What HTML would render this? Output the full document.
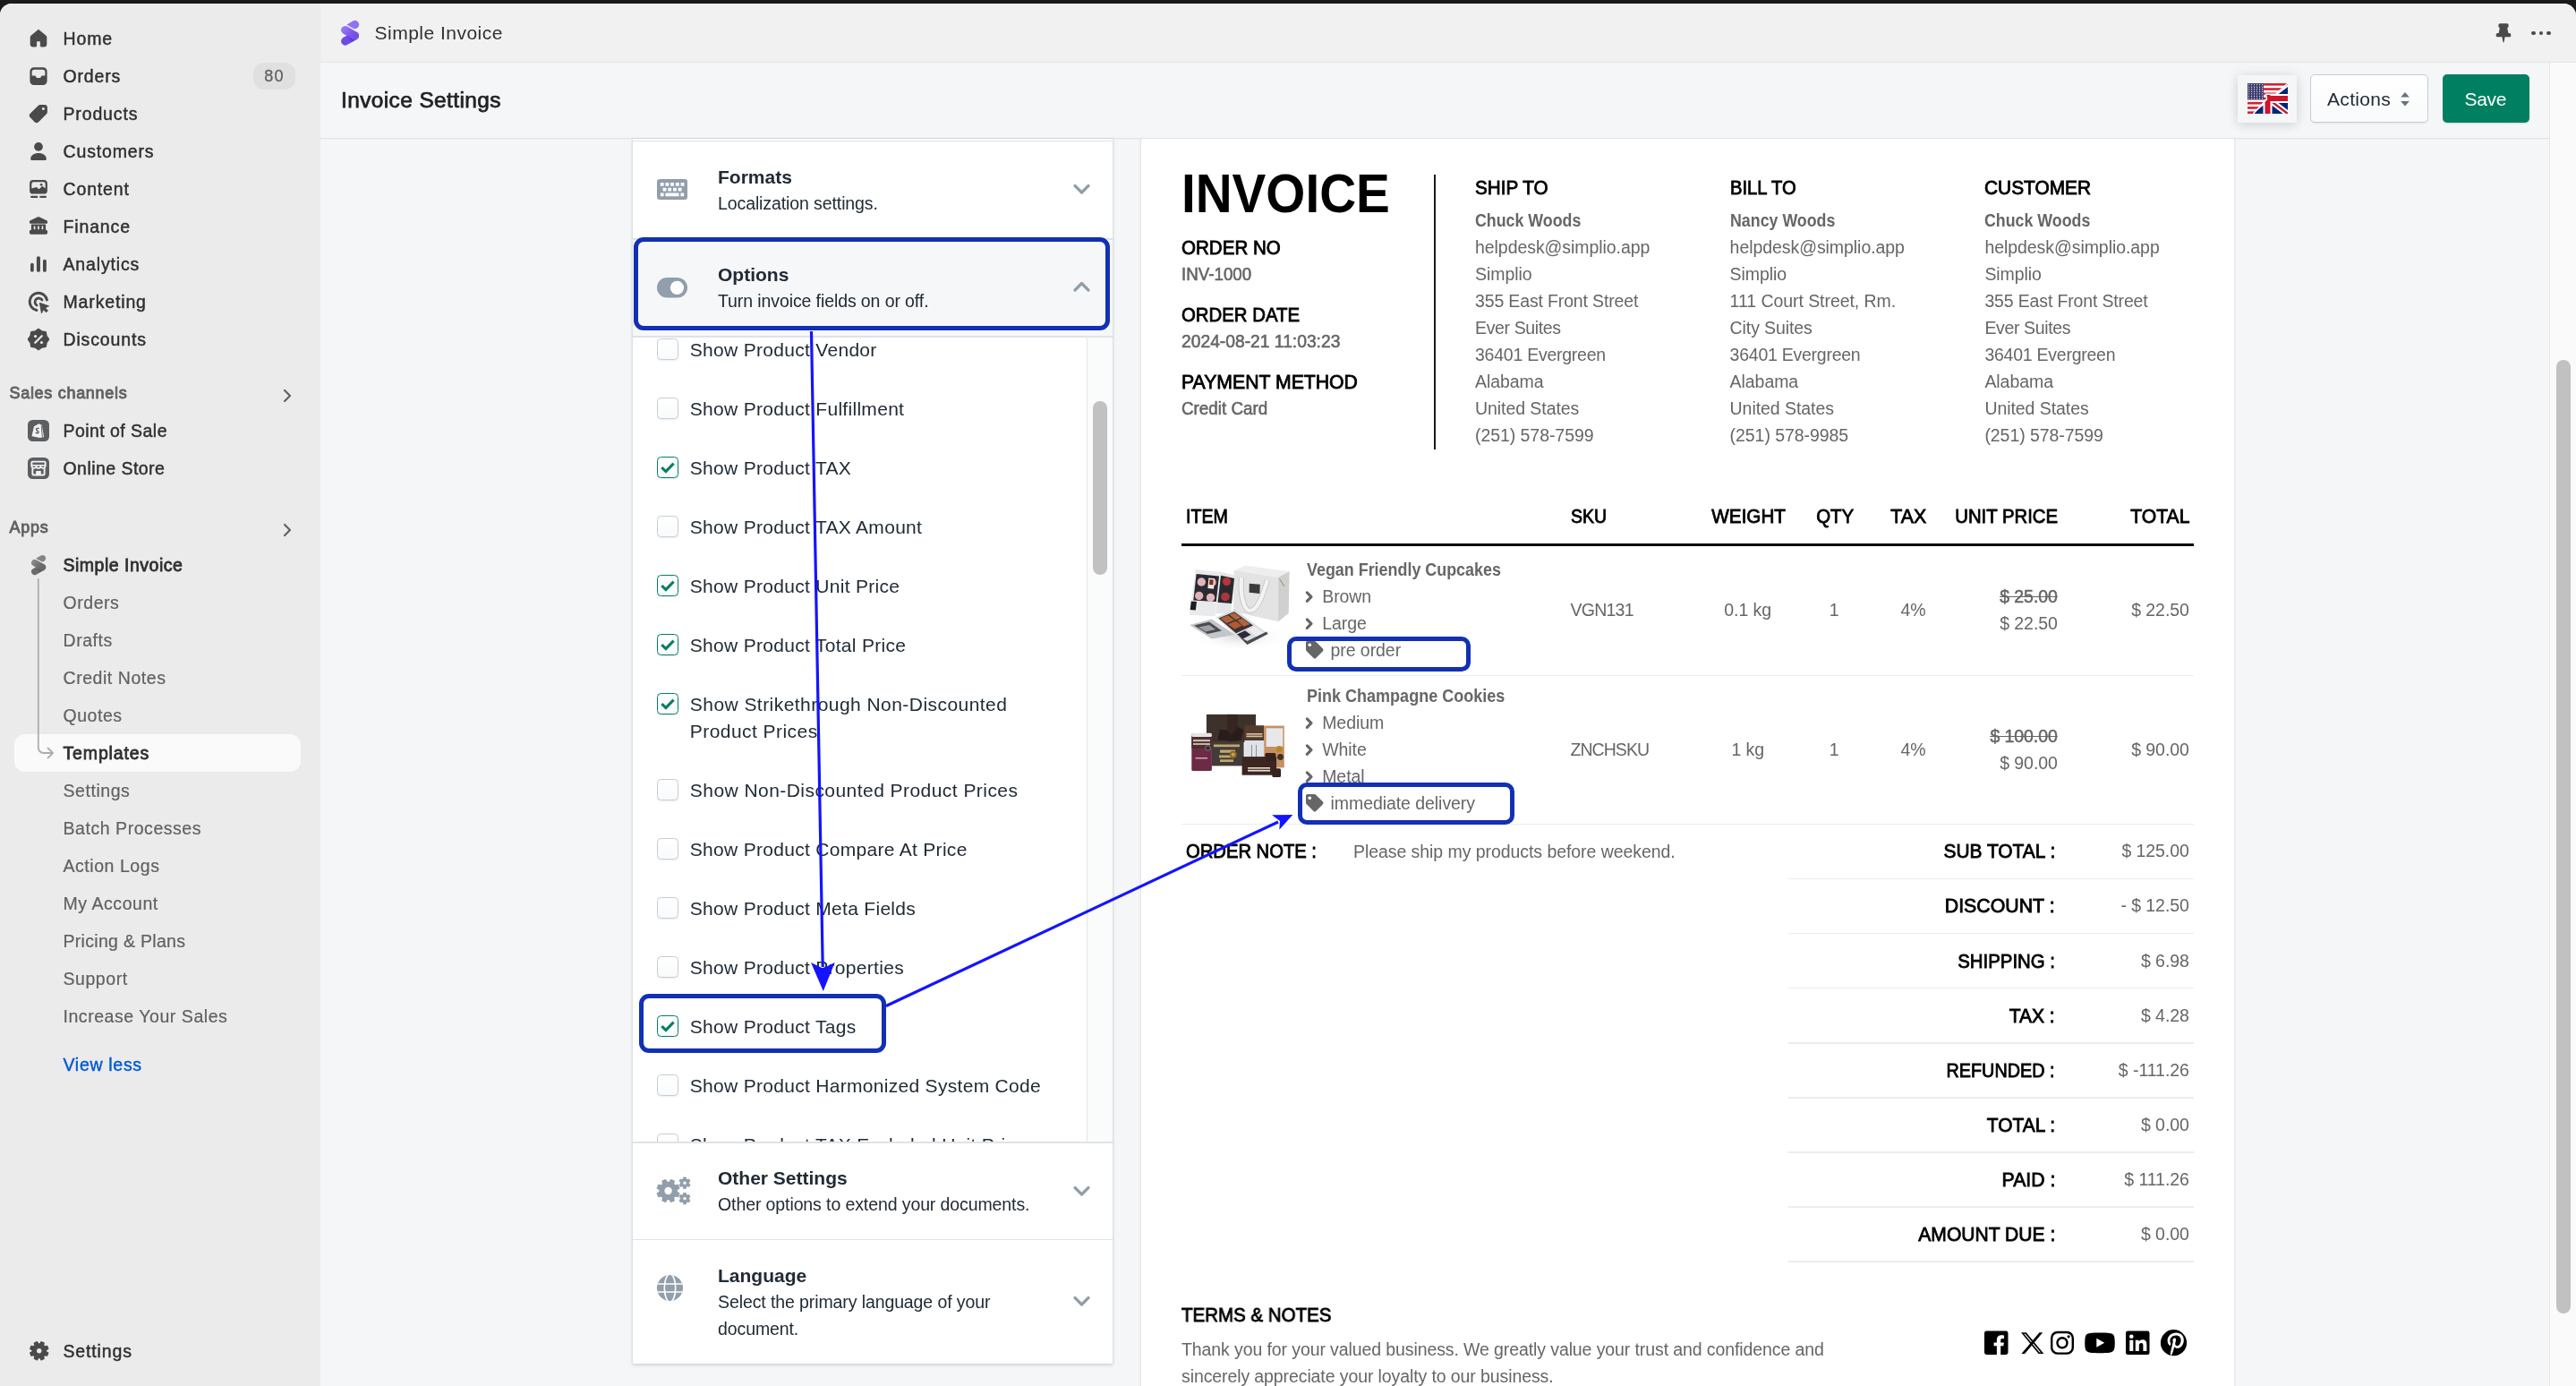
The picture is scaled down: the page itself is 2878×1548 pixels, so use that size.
<!DOCTYPE html><html><head><meta charset="utf-8"><title>Invoice Settings</title><style>*{box-sizing:border-box;margin:0;padding:0}
html,body{width:2878px;height:1548px;overflow:hidden;background:#1a1a1a;font-family:"Liberation Sans",sans-serif}
#frame{position:absolute;left:0;top:4px;width:2878px;height:1544px;border-radius:13px 14px 0 0;overflow:hidden;background:#f4f6f8}
#pg{will-change:transform;position:absolute;left:0;top:-4px;width:2878px;height:1548px}
.t{position:absolute;white-space:nowrap;font-size:19.5px;color:#303030}
.b{position:absolute}
svg{position:absolute;overflow:visible}
/* sidebar */
.nav{font-size:19.5px;color:#303030;letter-spacing:.85px;-webkit-text-stroke:.45px #303030}
.sub{font-size:19.5px;color:#616161;letter-spacing:.55px;-webkit-text-stroke:.2px #616161}
.navb{font-size:19.5px;color:#303030;font-weight:700;letter-spacing:.45px}
.sec{font-size:18px;color:#616161;letter-spacing:.7px;-webkit-text-stroke:.85px #616161}
.navs{font-size:19.5px;color:#303030;-webkit-text-stroke:.8px #303030}
/* card */
.ct{font-size:21px;font-weight:700;color:#212b36;letter-spacing:0}
.cs{font-size:19.5px;color:#212b36;letter-spacing:-.1px}
.cl{font-size:21px;color:#212b36;letter-spacing:.3px}
/* invoice */
.ph{font-size:22.5px;color:#000;-webkit-text-stroke:.85px #000}
.rb{font-size:19.5px;color:#666;font-weight:700;transform:scaleX(.913);transform-origin:left center}
.rm{font-size:21px;color:#666;-webkit-text-stroke:.6px #666;transform-origin:left center}
.rr{font-size:19.5px;color:#666;letter-spacing:-.06px}
</style></head><body>
<div id="frame"><div id="pg">
<div class="b " style="left:0px;top:0px;width:358px;height:1548px;background:#ebebeb"></div>
<svg style="left:28.0px;top:27.8px" width="30" height="30" viewBox="0 0 20 20" fill="#4a4a4a" ><path d="M10 3.3 L15.5 7.9 a1.6 1.6 0 0 1 .55 1.2 V14.3 a1.8 1.8 0 0 1-1.8 1.8 H12 a.6.6 0 0 1-.6-.6 V12.6 a.6.6 0 0 0-.6-.6 H9.2 a.6.6 0 0 0-.6.6 V15.5 a.6.6 0 0 1-.6.6 H5.75 a1.8 1.8 0 0 1-1.8-1.8 V9.1 a1.6 1.6 0 0 1 .55-1.2 Z" stroke="#4a4a4a" stroke-width=".3" stroke-linejoin="round"/></svg>
<div class="t nav" style="left:70.5px;top:23.3px;line-height:40px;">Home</div>
<svg style="left:28.0px;top:69.8px" width="30" height="30" viewBox="0 0 20 20" fill="#4a4a4a" ><path fill-rule="evenodd" d="M6.6 3.5 h6.8 a3 3 0 0 1 3 3 v7.2 a3 3 0 0 1-3 3 h-6.8 a3 3 0 0 1-3-3 v-7.2 a3 3 0 0 1 3-3 Z M5.1 9.6 V6.9 a1.8 1.8 0 0 1 1.8-1.8 h6.2 a1.8 1.8 0 0 1 1.8 1.8 v2.7 h-2.1 a.6.6 0 0 0-.5.3 l-.7 1.1 a.6.6 0 0 1-.5.3 h-2.2 a.6.6 0 0 1-.5-.3 l-.7-1.1 a.6.6 0 0 0-.5-.3 Z"/></svg>
<div class="t nav" style="left:70.5px;top:65.3px;line-height:40px;">Orders</div>
<svg style="left:28.0px;top:111.8px" width="30" height="30" viewBox="0 0 20 20" fill="#4a4a4a" ><path fill-rule="evenodd" d="M11.3 3.4 h3.2 a2.1 2.1 0 0 1 2.1 2.1 v3.2 a2.1 2.1 0 0 1-.62 1.5 l-5.9 5.9 a2.1 2.1 0 0 1-3 0 l-3.2-3.2 a2.1 2.1 0 0 1 0-3 l5.9-5.9 a2.1 2.1 0 0 1 1.5-.62 Z M13.6 5.4 a1 1 0 1 0 .01 0 Z"/></svg>
<div class="t nav" style="left:70.5px;top:107.3px;line-height:40px;">Products</div>
<svg style="left:28.0px;top:153.8px" width="30" height="30" viewBox="0 0 20 20" fill="#4a4a4a" ><circle cx="10" cy="6.6" r="3.25"/><path d="M4.1 15.6 c0-2.5 2.6-4.3 5.9-4.3 s5.9 1.8 5.9 4.3 a1 1 0 0 1-1 1 h-9.8 a1 1 0 0 1-1-1 Z"/></svg>
<div class="t nav" style="left:70.5px;top:149.3px;line-height:40px;">Customers</div>
<svg style="left:28.0px;top:195.8px" width="30" height="30" viewBox="0 0 20 20" fill="#4a4a4a" ><path fill-rule="evenodd" d="M6 3.4 h8 a2.6 2.6 0 0 1 2.6 2.6 v5.1 a2.6 2.6 0 0 1-2.6 2.6 h-8 a2.6 2.6 0 0 1-2.6-2.6 v-5.1 a2.6 2.6 0 0 1 2.6-2.6 Z M4.9 9.6 V6.4 a1.5 1.5 0 0 1 1.5-1.5 h7.2 a1.5 1.5 0 0 1 1.5 1.5 v3.3 l-1.7-1.5 a.7.7 0 0 0-.9 0 l-2.1 2 -1.7-1.4 a.7.7 0 0 0-.9 0 Z"/><circle cx="12.1" cy="6.9" r=".95"/><rect x="4" y="15.2" width="5.6" height="1.5" rx=".75"/><rect x="10.8" y="15.2" width="5.2" height="1.5" rx=".75"/></svg>
<div class="t nav" style="left:70.5px;top:191.3px;line-height:40px;">Content</div>
<svg style="left:28.0px;top:237.8px" width="30" height="30" viewBox="0 0 20 20" fill="#4a4a4a" ><path d="M9.5 2.9 a1.2 1.2 0 0 1 1 0 l5.6 2.6 a1.1 1.1 0 0 1 .6 1 v.5 a.8.8 0 0 1-.8.8 H4.1 a.8.8 0 0 1-.8-.8 v-.5 a1.1 1.1 0 0 1 .6-1 Z"/><path fill-rule="evenodd" d="M4.6 8.4 h10.8 v4.3 H4.6 Z M6.5 9.6 v2.5 h1.1 v-2.5 Z M9.45 9.6 v2.5 h1.1 v-2.5 Z M12.4 9.6 v2.5 h1.1 v-2.5 Z"/><rect x="3.3" y="12.5" width="13.4" height="3.3" rx="1.2"/></svg>
<div class="t nav" style="left:70.5px;top:233.3px;line-height:40px;">Finance</div>
<svg style="left:28.0px;top:279.8px" width="30" height="30" viewBox="0 0 20 20" fill="#4a4a4a" ><rect x="4" y="9.1" width="2.5" height="6.8" rx="1.2"/><rect x="8.6" y="4.1" width="2.7" height="11.8" rx="1.3"/><rect x="13.3" y="6.5" width="2.6" height="9.4" rx="1.25"/></svg>
<div class="t nav" style="left:70.5px;top:275.3px;line-height:40px;">Analytics</div>
<svg style="left:28.0px;top:321.8px" width="30" height="30" viewBox="0 0 20 20" fill="#4a4a4a" ><path d="M16.3 8.6 A6.5 6.5 0 1 0 8.6 16.3" fill="none" stroke="#4a4a4a" stroke-width="2" stroke-linecap="round"/><path d="M12.7 8.7 A2.9 2.9 0 1 0 8.7 12.7" fill="none" stroke="#4a4a4a" stroke-width="1.9" stroke-linecap="round"/><path d="M10.9 10.9 l6.8 2.3 -2.7 1.4 2 2 -1.3 1.3 -2-2 -1.4 2.700 Z" stroke="#4a4a4a" stroke-width=".6" stroke-linejoin="round"/></svg>
<div class="t nav" style="left:70.5px;top:317.3px;line-height:40px;">Marketing</div>
<svg style="left:28.0px;top:363.8px" width="30" height="30" viewBox="0 0 20 20" fill="#4a4a4a" ><path d="M17.35 10.00 L15.68 12.35 L15.20 15.20 L12.35 15.68 L10.00 17.35 L7.65 15.68 L4.80 15.20 L4.32 12.35 L2.65 10.00 L4.32 7.65 L4.80 4.80 L7.65 4.32 L10.00 2.65 L12.35 4.32 L15.20 4.80 L15.68 7.65 Z" stroke="#4a4a4a" stroke-width="1.6" stroke-linejoin="round"/><path d="M7.5 12.5 L12.5 7.5" stroke="#ebebeb" stroke-width="1.5" stroke-linecap="round"/><circle cx="7.7" cy="7.7" r="1.05" fill="#ebebeb"/><circle cx="12.3" cy="12.3" r="1.05" fill="#ebebeb"/></svg>
<div class="t nav" style="left:70.5px;top:359.3px;line-height:40px;">Discounts</div>
<div class="b " style="left:283px;top:70px;width:47px;height:29.5px;background:#e0e0e0;border-radius:12px"></div>
<div class="t " style="left:295.2px;top:65.0px;line-height:40px;font-size:18px;color:#616161;letter-spacing:1.2px;-webkit-text-stroke:.3px #616161">80</div>
<div class="t sec" style="left:10.5px;top:419.0px;line-height:40px;">Sales channels</div>
<svg style="left:312px;top:432px" width="18" height="20" viewBox="0 0 18 20" fill="none" stroke="#616161" stroke-width="2.2" stroke-linecap="round" stroke-linejoin="round"><path d="M6 4 l6 6 -6 6"/></svg>
<div class="t sec" style="left:10.5px;top:569.0px;line-height:40px;">Apps</div>
<svg style="left:312px;top:582px" width="18" height="20" viewBox="0 0 18 20" fill="none" stroke="#616161" stroke-width="2.2" stroke-linecap="round" stroke-linejoin="round"><path d="M6 4 l6 6 -6 6"/></svg>
<svg style="left:31px;top:469px" width="24" height="24" viewBox="0 0 24 24"><rect x="0" y="0" width="24" height="24" rx="5.5" fill="#5c5f62"/><path d="M7 7.2 l5.5-3 3.2 1.6 2.4 13.2 -4.3 1 -9.3-1.8 Z" fill="#f3f3f3"/><path d="M15.2 6.5 l1.2 13" stroke="#5c5f62" stroke-width=".9"/><path d="M12.6 9.6 c-1.6-.8-3.1-.1-3.1 1.1 c0 1.5 2.6 1.3 2.5 2.9 c-.1 1.2-1.7 1.5-3.2.5" fill="none" stroke="#5c5f62" stroke-width="1.5"/></svg>
<svg style="left:31px;top:511px" width="24" height="24" viewBox="0 0 24 24"><rect x="0" y="0" width="24" height="24" rx="5.5" fill="#5c5f62"/><path fill-rule="evenodd" d="M5.400 3.800 h13.200 a2 2 0 0 1 2 2 v3.600 a2.600 2.600 0 0 1-1 2 v7 a2 2 0 0 1-2 2 h-11.200 a2 2 0 0 1-2-2 v-7 a2.600 2.600 0 0 1-1-2 v-3.600 a2 2 0 0 1 2-2 Z M5.300 5.600 v2.300 h13.400 v-2.300 Z M5.300 9.400 a1.700 1.700 0 0 0 3.400 0 Z M10.300 9.400 a1.700 1.700 0 0 0 3.400 0 Z M15.300 9.400 a1.700 1.700 0 0 0 3.400 0 Z M6.300 12.600 v6 h2.900 v-3.600 h5.600 v3.600 h2.900 v-6 a3 3 0 0 1-2.700-.8 a3 3 0 0 1-3 .9 a3 3 0 0 1-3-.9 a3 3 0 0 1-2.700 .8 Z" fill="#f3f3f3"/></svg>
<div class="t nav" style="left:70.5px;top:461.2px;line-height:40px;letter-spacing:.45px">Point of Sale</div>
<div class="t nav" style="left:70.5px;top:503.2px;line-height:40px;letter-spacing:.45px">Online Store</div>
<svg style="left:34.9px;top:620px" width="16.1" height="22.2" viewBox="0 0 20.1 27.7" fill="none"><defs><linearGradient id="lgya" x1="4" y1="8" x2="16" y2="20" gradientUnits="userSpaceOnUse"><stop offset="0" stop-color="#878787"/><stop offset=".75" stop-color="#686868"/></linearGradient>
<linearGradient id="lgyb" x1="15.5" y1="16.9" x2="4.65" y2="23.1" gradientUnits="userSpaceOnUse"><stop offset="0" stop-color="#686868"/><stop offset=".38" stop-color="#595959"/><stop offset=".7" stop-color="#6b6b6b"/></linearGradient></defs>
<path d="M6.4 4.55 L13.22 0.61 A4.55 4.55 0 1 1 13.22 8.49 Z" fill="#858585"/>
<path d="M15.5 16.9 L4.65 23.1" stroke="url(#lgyb)" stroke-width="9.2" stroke-linecap="round"/>
<path d="M4.65 10.6 L15.5 16.9" stroke="url(#lgya)" stroke-width="9.2" stroke-linecap="round"/></svg>
<div class="t navs" style="left:70.5px;top:610.7px;line-height:40px;letter-spacing:.5px">Simple Invoice</div>
<div class="b " style="left:16px;top:820px;width:320px;height:42px;background:#fafafa;border-radius:12px"></div>
<svg style="left:36px;top:640px" width="30" height="210" viewBox="0 0 30 210" fill="none" stroke="#adadad" stroke-width="1.8" stroke-linecap="round" stroke-linejoin="round"><path d="M6.8 7 V195 a6 6 0 0 0 6 6 H22"/><path d="M17.5 195.5 L23 201 L17.5 206.5"/></svg>
<div class="t sub" style="left:70.5px;top:653.3px;line-height:40px;">Orders</div>
<div class="t sub" style="left:70.5px;top:695.3px;line-height:40px;">Drafts</div>
<div class="t sub" style="left:70.5px;top:737.3px;line-height:40px;">Credit Notes</div>
<div class="t sub" style="left:70.5px;top:779.3px;line-height:40px;">Quotes</div>
<div class="t sub" style="left:70.5px;top:863.3px;line-height:40px;">Settings</div>
<div class="t sub" style="left:70.5px;top:905.3px;line-height:40px;">Batch Processes</div>
<div class="t sub" style="left:70.5px;top:947.3px;line-height:40px;">Action Logs</div>
<div class="t sub" style="left:70.5px;top:989.3px;line-height:40px;">My Account</div>
<div class="t sub" style="left:70.5px;top:1031.3px;line-height:40px;letter-spacing:.3px">Pricing &amp; Plans</div>
<div class="t sub" style="left:70.5px;top:1073.3px;line-height:40px;">Support</div>
<div class="t sub" style="left:70.5px;top:1115.3px;line-height:40px;">Increase Your Sales</div>
<div class="t navs" style="left:70.5px;top:821.2px;line-height:40px;letter-spacing:.85px">Templates</div>
<div class="t " style="left:70.5px;top:1169.0px;line-height:40px;color:#005bd3;letter-spacing:.7px;-webkit-text-stroke:.45px #005bd3">View less</div>
<svg style="left:28.5px;top:1493.8px" width="29.5" height="29.5" viewBox="0 0 20 20" fill="#4a4a4a" ><path fill-rule="evenodd" d="M15.25 10.71 L16.82 11.58 L15.94 13.70 L14.21 13.22 L13.22 14.21 L13.70 15.94 L11.58 16.82 L10.71 15.25 L9.29 15.25 L8.42 16.82 L6.30 15.94 L6.78 14.21 L5.79 13.22 L4.06 13.70 L3.18 11.58 L4.75 10.71 L4.75 9.29 L3.18 8.42 L4.06 6.30 L5.79 6.78 L6.78 5.79 L6.30 4.06 L8.42 3.18 L9.29 4.75 L10.71 4.75 L11.58 3.18 L13.70 4.06 L13.22 5.79 L14.21 6.78 L15.94 6.30 L16.82 8.42 L15.25 9.29 Z M12.30 10.00 A2.3 2.3 0 1 0 7.70 10.00 A2.3 2.3 0 1 0 12.30 10.00 Z" stroke="#4a4a4a" stroke-width=".9" stroke-linejoin="round"/></svg>
<div class="t nav" style="left:70.5px;top:1488.8px;line-height:40px;">Settings</div>
<div class="b " style="left:358px;top:0px;width:2520px;height:69.5px;background:#f1f1f1;border-bottom:1px solid #e4e4e4"></div>
<svg style="left:381px;top:23.2px" width="20.1" height="27.7" viewBox="0 0 20.1 27.7" fill="none"><defs><linearGradient id="lpua" x1="4" y1="8" x2="16" y2="20" gradientUnits="userSpaceOnUse"><stop offset="0" stop-color="#9475f8"/><stop offset=".75" stop-color="#7350e6"/></linearGradient>
<linearGradient id="lpub" x1="15.5" y1="16.9" x2="4.65" y2="23.1" gradientUnits="userSpaceOnUse"><stop offset="0" stop-color="#7350e6"/><stop offset=".38" stop-color="#5a39cc"/><stop offset=".7" stop-color="#6f4be6"/></linearGradient></defs>
<path d="M6.4 4.55 L13.22 0.61 A4.55 4.55 0 1 1 13.22 8.49 Z" fill="#8f72f6"/>
<path d="M15.5 16.9 L4.65 23.1" stroke="url(#lpub)" stroke-width="9.2" stroke-linecap="round"/>
<path d="M4.65 10.6 L15.5 16.9" stroke="url(#lpua)" stroke-width="9.2" stroke-linecap="round"/></svg>
<div class="t " style="left:418.6px;top:17.0px;line-height:40px;font-size:21px;letter-spacing:.48px;color:#303030">Simple Invoice</div>
<svg style="left:2788px;top:25px" width="18" height="24" viewBox="0 0 18 24" fill="#4a4a4a"><path d="M5 1.2 h8 a1.6 1.6 0 0 1 1.6 1.6 v1.6 a1.6 1.6 0 0 1-1.4 1.6 l1.2 6 h1.2 a1.7 1.7 0 0 1 1.7 1.7 v1.2 a1.3 1.3 0 0 1-1.3 1.3 H10.6 l-1 5.6 a.6.6 0 0 1-1.2 0 l-1-5.6 H2 a1.3 1.3 0 0 1-1.3-1.3 v-1.2 a1.7 1.7 0 0 1 1.7-1.7 h1.2 l1.2-6 a1.6 1.6 0 0 1-1.4-1.6 v-1.6 a1.6 1.6 0 0 1 1.6-1.6 Z"/></svg>
<div class="b " style="left:2828.4px;top:34.5px;width:4.800000000000182px;height:4.799999999999997px;background:#4a4a4a;border-radius:50%"></div>
<div class="b " style="left:2836.6px;top:34.5px;width:4.800000000000182px;height:4.799999999999997px;background:#4a4a4a;border-radius:50%"></div>
<div class="b " style="left:2844.7999999999997px;top:34.5px;width:4.800000000000182px;height:4.799999999999997px;background:#4a4a4a;border-radius:50%"></div>
<div class="b " style="left:358px;top:70px;width:2491px;height:85px;background:#f4f6f8;border-bottom:1.5px solid #e1e4e8;box-shadow:0 1px 0 rgba(0,0,0,.02)"></div>
<div class="t " style="left:381.0px;top:92.2px;line-height:40px;font-size:24.4px;color:#202223;letter-spacing:.42px;-webkit-text-stroke:.75px #202223">Invoice Settings</div>
<div class="b " style="left:2848px;top:70px;width:30px;height:1478px;background:#fafafa;border-left:1.5px solid #e6e6e6"></div>
<div class="b " style="left:2855.5px;top:401.5px;width:16.0px;height:1065.5px;background:#c1c1c1;border-radius:8px"></div>
<div class="b " style="left:2500px;top:84px;width:66px;height:53px;background:#f4f6f8;box-shadow:0 0 14px rgba(0,0,0,.10),0 4px 10px rgba(0,0,0,.07)"></div>
<svg style="left:2511px;top:93px" width="45" height="34" viewBox="0 0 45 34"><defs><clipPath id="fc"><rect x="0" y="0" width="45" height="34"/></clipPath><clipPath id="us"><path d="M0 0 H45 L31.500 12.300 H20.500 L21.500 17.800 L6.500 34 H0 Z"/></clipPath><clipPath id="uk"><path d="M45 0 V34 H6.500 L21.500 17.800 L20.500 12.300 H31.500 Z"/></clipPath></defs>
<g clip-path="url(#fc)">
<g clip-path="url(#uk)"><rect width="45" height="34" fill="#00247d"/><path d="M0 0 L45 34 M45 0 L0 34" stroke="#fff" stroke-width="6.5"/><path d="M0 0 L45 34 M45 0 L0 34" stroke="#cf142b" stroke-width="2.4"/><path d="M22.5 0 V34 M0 17 H45" stroke="#fff" stroke-width="10"/><path d="M22.5 0 V34 M0 17 H45" stroke="#cf142b" stroke-width="6"/></g>
<g clip-path="url(#us)"><rect width="45" height="34" fill="#fff"/><rect x="0" y="0.00" width="45" height="2.615" fill="#d22234"/><rect x="0" y="5.23" width="45" height="2.615" fill="#d22234"/><rect x="0" y="10.46" width="45" height="2.615" fill="#d22234"/><rect x="0" y="15.69" width="45" height="2.615" fill="#d22234"/><rect x="0" y="20.92" width="45" height="2.615" fill="#d22234"/><rect x="0" y="26.15" width="45" height="2.615" fill="#d22234"/><rect x="0" y="31.38" width="45" height="2.615" fill="#d22234"/><rect x="0" y="0" width="18" height="18.3" fill="#3c3b6e"/><g fill="#fff"><circle cx="1.6" cy="1.6" r=".62"/><circle cx="4.6" cy="1.6" r=".62"/><circle cx="7.6" cy="1.6" r=".62"/><circle cx="10.6" cy="1.6" r=".62"/><circle cx="13.6" cy="1.6" r=".62"/><circle cx="16.6" cy="1.6" r=".62"/><circle cx="1.6" cy="4.2" r=".62"/><circle cx="4.6" cy="4.2" r=".62"/><circle cx="7.6" cy="4.2" r=".62"/><circle cx="10.6" cy="4.2" r=".62"/><circle cx="13.6" cy="4.2" r=".62"/><circle cx="16.6" cy="4.2" r=".62"/><circle cx="1.6" cy="6.7" r=".62"/><circle cx="4.6" cy="6.7" r=".62"/><circle cx="7.6" cy="6.7" r=".62"/><circle cx="10.6" cy="6.7" r=".62"/><circle cx="13.6" cy="6.7" r=".62"/><circle cx="16.6" cy="6.7" r=".62"/><circle cx="1.6" cy="9.2" r=".62"/><circle cx="4.6" cy="9.2" r=".62"/><circle cx="7.6" cy="9.2" r=".62"/><circle cx="10.6" cy="9.2" r=".62"/><circle cx="13.6" cy="9.2" r=".62"/><circle cx="16.6" cy="9.2" r=".62"/><circle cx="1.6" cy="11.8" r=".62"/><circle cx="4.6" cy="11.8" r=".62"/><circle cx="7.6" cy="11.8" r=".62"/><circle cx="10.6" cy="11.8" r=".62"/><circle cx="13.6" cy="11.8" r=".62"/><circle cx="16.6" cy="11.8" r=".62"/><circle cx="1.6" cy="14.3" r=".62"/><circle cx="4.6" cy="14.3" r=".62"/><circle cx="7.6" cy="14.3" r=".62"/><circle cx="10.6" cy="14.3" r=".62"/><circle cx="13.6" cy="14.3" r=".62"/><circle cx="16.6" cy="14.3" r=".62"/><circle cx="1.6" cy="16.9" r=".62"/><circle cx="4.6" cy="16.9" r=".62"/><circle cx="7.6" cy="16.9" r=".62"/><circle cx="10.6" cy="16.9" r=".62"/><circle cx="13.6" cy="16.9" r=".62"/><circle cx="16.6" cy="16.9" r=".62"/></g></g>
<path d="M45 0 L31.500 12.300 H20.500 L21.500 17.800 L6.500 34" fill="none" stroke="#fff" stroke-width="1.500"/>
</g></svg>
<div class="b " style="left:2580.6px;top:82.8px;width:132.9000000000001px;height:54.7px;background:linear-gradient(#fff,#f9fafb);border:1.5px solid #c4cdd5;border-radius:5px;box-shadow:0 1.5px 0 rgba(22,29,37,.05)"></div>
<div class="t " style="left:2600.0px;top:91.2px;line-height:40px;font-size:21px;color:#212b36;letter-spacing:.33px">Actions</div>
<svg style="left:2681px;top:102px" width="12" height="18" viewBox="0 0 12 18" fill="#637381"><path d="M6 1 L10.8 6.6 H1.2 Z"/><path d="M6 16.6 L10.8 11 H1.2 Z"/></svg>
<div class="b " style="left:2729px;top:82.9px;width:97px;height:54.29999999999998px;background:#008060;border-radius:5px;box-shadow:0 1.5px 0 rgba(0,0,0,.08)"></div>
<div class="t " style="left:2753.5px;top:91.2px;line-height:40px;font-size:21px;color:#fff;letter-spacing:-.3px">Save</div>
<div class="b " style="left:707px;top:155px;width:536px;height:1368px;background:#fff;box-shadow:0 0 0 1.5px rgba(63,63,68,.05),0 1.5px 4px rgba(63,63,68,.15)"></div>
<div class="b " style="left:707px;top:156.5px;width:536px;height:1.5px;background:#dfe3e8"></div>
<svg style="left:734px;top:200px" width="34" height="23" viewBox="0 0 34 23"><rect x="0" y="0" width="34" height="23" rx="3" fill="#919eab"/><g fill="#fff"><rect x="3.8" y="4" width="3.8" height="3.8" rx=".5"/><rect x="9.5" y="4" width="3.8" height="3.8" rx=".5"/><rect x="15.2" y="4" width="3.8" height="3.8" rx=".5"/><rect x="20.9" y="4" width="3.8" height="3.8" rx=".5"/><rect x="26.6" y="4" width="3.8" height="3.8" rx=".5"/><rect x="6.6" y="9.7" width="3.8" height="3.8" rx=".5"/><rect x="12.3" y="9.7" width="3.8" height="3.8" rx=".5"/><rect x="18.0" y="9.7" width="3.8" height="3.8" rx=".5"/><rect x="23.7" y="9.7" width="3.8" height="3.8" rx=".5"/><rect x="3.8" y="15.4" width="3.8" height="3.8" rx=".5"/><rect x="9.4" y="15.4" width="15.2" height="3.8" rx=".5"/><rect x="26.4" y="15.4" width="3.8" height="3.8" rx=".5"/></g></svg>
<div class="t ct" style="left:802.0px;top:178.0px;line-height:40px;">Formats</div>
<div class="t cs" style="left:802.0px;top:206.8px;line-height:40px;">Localization settings.</div>
<svg style="left:1199.0px;top:204.8px" width="19" height="12.5" viewBox="0 0 19 12.5"><path d="M2 2.5 L9.5 10 L17 2.5" fill="none" stroke="#919eab" stroke-width="3.2" stroke-linecap="round" stroke-linejoin="round"/></svg>
<div class="b " style="left:707px;top:266px;width:536px;height:1.5px;background:#dfe3e8"></div>
<div class="b " style="left:707px;top:267.5px;width:536px;height:107.5px;background:#f6f7f9"></div>
<div class="b " style="left:707px;top:375px;width:536px;height:1.5px;background:#dfe3e8"></div>
<svg style="left:734px;top:309.5px" width="34" height="23" viewBox="0 0 34 23"><rect width="34" height="22.6" rx="11.3" fill="#919eab"/><circle cx="22.4" cy="11.3" r="7.6" fill="#fff"/></svg>
<div class="t ct" style="left:802.0px;top:287.3px;line-height:40px;">Options</div>
<div class="t cs" style="left:802.0px;top:316.0px;line-height:40px;">Turn invoice fields on or off.</div>
<svg style="left:1199.0px;top:314.3px" width="19" height="12.5" viewBox="0 0 19 12.5"><path d="M2 10 L9.5 2.5 L17 10" fill="none" stroke="#919eab" stroke-width="3.2" stroke-linecap="round" stroke-linejoin="round"/></svg>
<div class="b " style="left:1213.5px;top:376.5px;width:1.5px;height:898.5px;background:#e4e7eb"></div>
<div class="b " style="left:1215px;top:376.5px;width:28px;height:898.5px;background:#fafbfb"></div>
<div class="b " style="left:1221px;top:447.5px;width:16px;height:194.5px;background:#c1c1c1;border-radius:8px"></div>
<div class="b" style="left:707px;top:376.5px;width:506px;height:898.5px;overflow:hidden"><div class="b" style="left:-707px;top:-376.5px;width:2878px;height:1548px">
<div class="b " style="left:734px;top:377.7px;width:24px;height:24.0px;background:linear-gradient(#fff,#f9fafb);border:1.5px solid #c4cdd5;border-radius:4.5px;box-shadow:0 1.5px 0 rgba(22,29,37,.05)"></div>
<div class="t cl" style="left:770.8px;top:375.7px;line-height:30px;">Show Product Vendor</div>
<div class="b " style="left:734px;top:443.8px;width:24px;height:24.0px;background:linear-gradient(#fff,#f9fafb);border:1.5px solid #c4cdd5;border-radius:4.5px;box-shadow:0 1.5px 0 rgba(22,29,37,.05)"></div>
<div class="t cl" style="left:770.8px;top:441.8px;line-height:30px;">Show Product Fulfillment</div>
<div class="b " style="left:734px;top:509.79999999999995px;width:24px;height:24.0px;background:linear-gradient(#fff,#f9fafb);border:1.5px solid #008060;border-radius:4.5px;box-shadow:0 1.5px 0 rgba(22,29,37,.05)"></div>
<svg style="left:734px;top:509.79999999999995px" width="24" height="24" viewBox="0 0 24 24" fill="none" stroke="#008060" stroke-width="3.1" stroke-linejoin="miter"><path d="M5.3 12.2 L9.9 16.6 L18.6 7.6"/></svg>
<div class="t cl" style="left:770.8px;top:507.8px;line-height:30px;">Show Product TAX</div>
<div class="b " style="left:734px;top:575.8px;width:24px;height:24.0px;background:linear-gradient(#fff,#f9fafb);border:1.5px solid #c4cdd5;border-radius:4.5px;box-shadow:0 1.5px 0 rgba(22,29,37,.05)"></div>
<div class="t cl" style="left:770.8px;top:573.8px;line-height:30px;">Show Product TAX Amount</div>
<div class="b " style="left:734px;top:641.8px;width:24px;height:24.0px;background:linear-gradient(#fff,#f9fafb);border:1.5px solid #008060;border-radius:4.5px;box-shadow:0 1.5px 0 rgba(22,29,37,.05)"></div>
<svg style="left:734px;top:641.8px" width="24" height="24" viewBox="0 0 24 24" fill="none" stroke="#008060" stroke-width="3.1" stroke-linejoin="miter"><path d="M5.3 12.2 L9.9 16.6 L18.6 7.6"/></svg>
<div class="t cl" style="left:770.8px;top:639.8px;line-height:30px;">Show Product Unit Price</div>
<div class="b " style="left:734px;top:707.8px;width:24px;height:24.0px;background:linear-gradient(#fff,#f9fafb);border:1.5px solid #008060;border-radius:4.5px;box-shadow:0 1.5px 0 rgba(22,29,37,.05)"></div>
<svg style="left:734px;top:707.8px" width="24" height="24" viewBox="0 0 24 24" fill="none" stroke="#008060" stroke-width="3.1" stroke-linejoin="miter"><path d="M5.3 12.2 L9.9 16.6 L18.6 7.6"/></svg>
<div class="t cl" style="left:770.8px;top:705.8px;line-height:30px;">Show Product Total Price</div>
<div class="b " style="left:734px;top:774.3px;width:24px;height:24.0px;background:linear-gradient(#fff,#f9fafb);border:1.5px solid #008060;border-radius:4.5px;box-shadow:0 1.5px 0 rgba(22,29,37,.05)"></div>
<svg style="left:734px;top:774.3px" width="24" height="24" viewBox="0 0 24 24" fill="none" stroke="#008060" stroke-width="3.1" stroke-linejoin="miter"><path d="M5.3 12.2 L9.9 16.6 L18.6 7.6"/></svg>
<div class="t cl" style="left:770.8px;top:772.3px;line-height:30px;letter-spacing:.45px">Show Strikethrough Non-Discounted<br>Product Prices</div>
<div class="b " style="left:734px;top:869.9px;width:24px;height:24.0px;background:linear-gradient(#fff,#f9fafb);border:1.5px solid #c4cdd5;border-radius:4.5px;box-shadow:0 1.5px 0 rgba(22,29,37,.05)"></div>
<div class="t cl" style="left:770.8px;top:867.9px;line-height:30px;letter-spacing:.45px">Show Non-Discounted Product Prices</div>
<div class="b " style="left:734px;top:935.9px;width:24px;height:24.0px;background:linear-gradient(#fff,#f9fafb);border:1.5px solid #c4cdd5;border-radius:4.5px;box-shadow:0 1.5px 0 rgba(22,29,37,.05)"></div>
<div class="t cl" style="left:770.8px;top:933.9px;line-height:30px;">Show Product Compare At Price</div>
<div class="b " style="left:734px;top:1001.9px;width:24px;height:24.000000000000114px;background:linear-gradient(#fff,#f9fafb);border:1.5px solid #c4cdd5;border-radius:4.5px;box-shadow:0 1.5px 0 rgba(22,29,37,.05)"></div>
<div class="t cl" style="left:770.8px;top:999.9px;line-height:30px;">Show Product Meta Fields</div>
<div class="b " style="left:734px;top:1067.8999999999999px;width:24px;height:24.0px;background:linear-gradient(#fff,#f9fafb);border:1.5px solid #c4cdd5;border-radius:4.5px;box-shadow:0 1.5px 0 rgba(22,29,37,.05)"></div>
<div class="t cl" style="left:770.8px;top:1065.9px;line-height:30px;">Show Product Properties</div>
<div class="b " style="left:734px;top:1133.8999999999999px;width:24px;height:24.0px;background:linear-gradient(#fff,#f9fafb);border:1.5px solid #008060;border-radius:4.5px;box-shadow:0 1.5px 0 rgba(22,29,37,.05)"></div>
<svg style="left:734px;top:1133.8999999999999px" width="24" height="24" viewBox="0 0 24 24" fill="none" stroke="#008060" stroke-width="3.1" stroke-linejoin="miter"><path d="M5.3 12.2 L9.9 16.6 L18.6 7.6"/></svg>
<div class="t cl" style="left:770.8px;top:1131.9px;line-height:30px;">Show Product Tags</div>
<div class="b " style="left:734px;top:1199.8999999999999px;width:24px;height:24.0px;background:linear-gradient(#fff,#f9fafb);border:1.5px solid #c4cdd5;border-radius:4.5px;box-shadow:0 1.5px 0 rgba(22,29,37,.05)"></div>
<div class="t cl" style="left:770.8px;top:1197.9px;line-height:30px;">Show Product Harmonized System Code</div>
<div class="b " style="left:734px;top:1265.8999999999999px;width:24px;height:24.0px;background:linear-gradient(#fff,#f9fafb);border:1.5px solid #c4cdd5;border-radius:4.5px;box-shadow:0 1.5px 0 rgba(22,29,37,.05)"></div>
<div class="t cl" style="left:770.8px;top:1263.9px;line-height:30px;">Show Product TAX Excluded Unit Price</div>
</div></div>
<div class="b " style="left:707px;top:1275px;width:536px;height:1.5px;background:#dfe3e8"></div>
<svg style="left:733.8px;top:1314.8px" width="38" height="30" viewBox="0 0 38 30" fill="#919eab" stroke="#919eab" stroke-width="1.4" stroke-linejoin="round" fill-rule="evenodd"><path d="M22.10 16.35 L24.85 17.94 L23.34 21.58 L20.28 20.76 L18.36 22.68 L19.18 25.74 L15.54 27.25 L13.95 24.50 L11.25 24.50 L9.66 27.25 L6.02 25.74 L6.84 22.68 L4.92 20.76 L1.86 21.58 L0.35 17.94 L3.10 16.35 L3.10 13.65 L0.35 12.06 L1.86 8.42 L4.92 9.24 L6.84 7.32 L6.02 4.26 L9.66 2.75 L11.25 5.50 L13.95 5.50 L15.54 2.75 L19.18 4.26 L18.36 7.32 L20.28 9.24 L23.34 8.42 L24.85 12.06 L22.10 13.65 Z M17.50 15.00 A4.9 4.9 0 1 0 7.70 15.00 A4.9 4.9 0 1 0 17.50 15.00 Z"/><path d="M35.53 7.01 L37.01 8.08 L35.64 10.46 L33.97 9.71 L32.56 10.53 L32.37 12.35 L29.63 12.35 L29.44 10.53 L28.03 9.71 L26.36 10.46 L24.99 8.08 L26.47 7.01 L26.47 5.39 L24.99 4.32 L26.36 1.94 L28.03 2.69 L29.44 1.87 L29.63 0.05 L32.37 0.05 L32.56 1.87 L33.97 2.69 L35.64 1.94 L37.01 4.32 L35.53 5.39 Z M33.20 6.20 A2.2 2.2 0 1 0 28.80 6.20 A2.2 2.2 0 1 0 33.20 6.20 Z" stroke-width="1"/><path d="M35.53 24.41 L37.01 25.48 L35.64 27.86 L33.97 27.11 L32.56 27.93 L32.37 29.75 L29.63 29.75 L29.44 27.93 L28.03 27.11 L26.36 27.86 L24.99 25.48 L26.47 24.41 L26.47 22.79 L24.99 21.72 L26.36 19.34 L28.03 20.09 L29.44 19.27 L29.63 17.45 L32.37 17.45 L32.56 19.27 L33.97 20.09 L35.64 19.34 L37.01 21.72 L35.53 22.79 Z M33.20 23.60 A2.2 2.2 0 1 0 28.80 23.60 A2.2 2.2 0 1 0 33.20 23.60 Z" stroke-width="1"/></svg>
<div class="t ct" style="left:802.0px;top:1296.0px;line-height:40px;">Other Settings</div>
<div class="t cs" style="left:802.0px;top:1324.8px;line-height:40px;">Other options to extend your documents.</div>
<svg style="left:1199.0px;top:1323.6px" width="19" height="12.5" viewBox="0 0 19 12.5"><path d="M2 2.5 L9.5 10 L17 2.5" fill="none" stroke="#919eab" stroke-width="3.2" stroke-linecap="round" stroke-linejoin="round"/></svg>
<div class="b " style="left:707px;top:1383.5px;width:536px;height:1.5px;background:#dfe3e8"></div>
<svg style="left:734px;top:1424.2px" width="29" height="29" viewBox="0 0 29 29"><defs><clipPath id="gc"><circle cx="14.5" cy="14.5" r="14.5"/></clipPath></defs><circle cx="14.5" cy="14.5" r="14.5" fill="#919eab"/><g clip-path="url(#gc)" fill="none" stroke="#fff" stroke-width="1.7"><ellipse cx="14.5" cy="14.5" rx="6.2" ry="15.5"/><path d="M-1 10 H30 M-1 19 H30"/></g></svg>
<div class="t ct" style="left:802.0px;top:1405.2px;line-height:40px;">Language</div>
<div class="t cs" style="left:802.0px;top:1434.0px;line-height:40px;">Select the primary language of your</div>
<div class="t cs" style="left:802.0px;top:1463.6px;line-height:40px;">document.</div>
<svg style="left:1199.0px;top:1447.3999999999999px" width="19" height="12.5" viewBox="0 0 19 12.5"><path d="M2 2.5 L9.5 10 L17 2.5" fill="none" stroke="#919eab" stroke-width="3.2" stroke-linecap="round" stroke-linejoin="round"/></svg>
<div class="b " style="left:1275px;top:155px;width:1221px;height:1393px;background:#fff;box-shadow:-1.5px 0 0 rgba(63,63,68,.07),1.5px 0 0 rgba(63,63,68,.07)"></div>
<div class="t " style="left:1319.6px;top:181.3px;line-height:70px;transform:scaleX(0.9205);transform-origin:left center;font-size:61.5px;font-weight:700;color:#000">INVOICE</div>
<div class="t ph" style="left:1319.6px;top:257.0px;line-height:40px;transform:scaleX(0.9134);transform-origin:left center;">ORDER NO</div>
<div class="t rm" style="left:1319.6px;top:286.2px;line-height:40px;transform:scaleX(0.893);transform-origin:left center;">INV-1000</div>
<div class="t ph" style="left:1319.6px;top:332.0px;line-height:40px;transform:scaleX(0.9055);transform-origin:left center;">ORDER DATE</div>
<div class="t rm" style="left:1319.6px;top:361.2px;line-height:40px;transform:scaleX(0.917);transform-origin:left center;">2024-08-21 11:03:23</div>
<div class="t ph" style="left:1319.6px;top:407.0px;line-height:40px;transform:scaleX(0.9434);transform-origin:left center;">PAYMENT METHOD</div>
<div class="t rm" style="left:1319.6px;top:436.2px;line-height:40px;transform:scaleX(0.896);transform-origin:left center;">Credit Card</div>
<div class="b " style="left:1601.5px;top:195px;width:2.0px;height:306.5px;background:#1a1a1a"></div>
<div class="t ph" style="left:1648.0px;top:190.0px;line-height:40px;transform:scaleX(0.9185);transform-origin:left center;">SHIP TO</div>
<div class="t rb" style="left:1648.0px;top:226.3px;line-height:40px;">Chuck Woods</div>
<div class="t rr" style="left:1648.0px;top:256.3px;line-height:40px;">helpdesk@simplio.app</div>
<div class="t rr" style="left:1648.0px;top:286.3px;line-height:40px;">Simplio</div>
<div class="t rr" style="left:1648.0px;top:316.3px;line-height:40px;letter-spacing:-0.15px">355 East Front Street</div>
<div class="t rr" style="left:1648.0px;top:346.3px;line-height:40px;letter-spacing:-0.36px">Ever Suites</div>
<div class="t rr" style="left:1648.0px;top:376.3px;line-height:40px;letter-spacing:-0.25px">36401 Evergreen</div>
<div class="t rr" style="left:1648.0px;top:406.3px;line-height:40px;">Alabama</div>
<div class="t rr" style="left:1648.0px;top:436.3px;line-height:40px;">United States</div>
<div class="t rr" style="left:1648.0px;top:466.3px;line-height:40px;">(251) 578-7599</div>
<div class="t ph" style="left:1932.6px;top:190.0px;line-height:40px;transform:scaleX(0.8981);transform-origin:left center;">BILL TO</div>
<div class="t rb" style="left:1932.6px;top:226.3px;line-height:40px;">Nancy Woods</div>
<div class="t rr" style="left:1932.6px;top:256.3px;line-height:40px;">helpdesk@simplio.app</div>
<div class="t rr" style="left:1932.6px;top:286.3px;line-height:40px;">Simplio</div>
<div class="t rr" style="left:1932.6px;top:316.3px;line-height:40px;">111 Court Street, Rm.</div>
<div class="t rr" style="left:1932.6px;top:346.3px;line-height:40px;letter-spacing:-0.1px">City Suites</div>
<div class="t rr" style="left:1932.6px;top:376.3px;line-height:40px;letter-spacing:-0.25px">36401 Evergreen</div>
<div class="t rr" style="left:1932.6px;top:406.3px;line-height:40px;">Alabama</div>
<div class="t rr" style="left:1932.6px;top:436.3px;line-height:40px;">United States</div>
<div class="t rr" style="left:1932.6px;top:466.3px;line-height:40px;">(251) 578-9985</div>
<div class="t ph" style="left:2217.4px;top:190.0px;line-height:40px;transform:scaleX(0.9276);transform-origin:left center;">CUSTOMER</div>
<div class="t rb" style="left:2217.4px;top:226.3px;line-height:40px;">Chuck Woods</div>
<div class="t rr" style="left:2217.4px;top:256.3px;line-height:40px;">helpdesk@simplio.app</div>
<div class="t rr" style="left:2217.4px;top:286.3px;line-height:40px;">Simplio</div>
<div class="t rr" style="left:2217.4px;top:316.3px;line-height:40px;letter-spacing:-0.15px">355 East Front Street</div>
<div class="t rr" style="left:2217.4px;top:346.3px;line-height:40px;letter-spacing:-0.36px">Ever Suites</div>
<div class="t rr" style="left:2217.4px;top:376.3px;line-height:40px;letter-spacing:-0.25px">36401 Evergreen</div>
<div class="t rr" style="left:2217.4px;top:406.3px;line-height:40px;">Alabama</div>
<div class="t rr" style="left:2217.4px;top:436.3px;line-height:40px;">United States</div>
<div class="t rr" style="left:2217.4px;top:466.3px;line-height:40px;">(251) 578-7599</div>
<div class="t ph" style="left:1324.5px;top:557.2px;line-height:40px;transform:scaleX(0.8742);transform-origin:left center;">ITEM</div>
<div class="t ph" style="left:1754.5px;top:557.2px;line-height:40px;transform:scaleX(0.8666);transform-origin:left center;">SKU</div>
<div class="t ph" style="right:883.0px;top:557.2px;line-height:40px;transform:scaleX(0.9184);transform-origin:right center;">WEIGHT</div>
<div class="t ph" style="right:807.0px;top:557.2px;line-height:40px;transform:scaleX(0.9092);transform-origin:right center;">QTY</div>
<div class="t ph" style="right:726.0px;top:557.2px;line-height:40px;transform:scaleX(0.9441);transform-origin:right center;">TAX</div>
<div class="t ph" style="right:579.0px;top:557.2px;line-height:40px;transform:scaleX(0.9037);transform-origin:right center;">UNIT PRICE</div>
<div class="t ph" style="right:431.8px;top:557.2px;line-height:40px;transform:scaleX(0.9404);transform-origin:right center;">TOTAL</div>
<div class="b " style="left:1320px;top:607px;width:1131px;height:3.2000000000000455px;background:#000"></div>
<div class="b " style="left:1320px;top:753.6px;width:1131px;height:1.5px;background:#ececec"></div>
<div class="b " style="left:1320px;top:919.6px;width:1131px;height:1.5px;background:#ececec"></div>
<div class="t rb" style="left:1459.6px;top:616.3px;line-height:40px;transform:scaleX(0.918);transform-origin:left center;">Vegan Friendly Cupcakes</div>
<svg style="left:1458.4px;top:659.7px" width="10" height="13.2" viewBox="0 0 10 13.2"><path d="M2.300 1.900 L7 6.600 L2.300 11.300" fill="none" stroke="#666" stroke-width="3.100" stroke-linecap="round" stroke-linejoin="round"/></svg>
<div class="t rr" style="left:1477.2px;top:646.3px;line-height:40px;">Brown</div>
<svg style="left:1458.4px;top:689.7px" width="10" height="13.2" viewBox="0 0 10 13.2"><path d="M2.300 1.900 L7 6.600 L2.300 11.300" fill="none" stroke="#666" stroke-width="3.100" stroke-linecap="round" stroke-linejoin="round"/></svg>
<div class="t rr" style="left:1477.2px;top:676.3px;line-height:40px;">Large</div>
<svg style="left:1459.1px;top:715.6px" width="19.5" height="19.5" viewBox="0 0 512 512" fill="#666"><path d="M0 252.118V48C0 21.49 21.49 0 48 0h204.118a48 48 0 0 1 33.941 14.059l211.882 211.882c18.745 18.745 18.745 49.137 0 67.882L293.823 497.941c-18.745 18.745-49.137 18.745-67.882 0L14.059 286.059A48 48 0 0 1 0 252.118zM112 64c-26.51 0-48 21.49-48 48s21.49 48 48 48 48-21.49 48-48-21.49-48-48-48z"/></svg>
<div class="t rr" style="left:1486.5px;top:706.3px;line-height:40px;">pre order</div>
<div class="t rr" style="left:1754.5px;top:661.4px;line-height:40px;letter-spacing:-.75px">VGN131</div>
<div class="t rr" style="right:899.0px;top:661.4px;line-height:40px;">0.1 kg</div>
<div class="t rr" style="right:823.5px;top:661.4px;line-height:40px;">1</div>
<div class="t rr" style="right:726.4px;top:661.4px;line-height:40px;">4%</div>
<div class="t rr" style="right:579.2px;top:646.4px;line-height:40px;text-decoration:line-through;-webkit-text-stroke:.5px #666">$ 25.00</div>
<div class="t rr" style="right:579.2px;top:676.2px;line-height:40px;">$ 22.50</div>
<div class="t rr" style="right:432.2px;top:661.4px;line-height:40px;">$ 22.50</div>
<div class="t rb" style="left:1459.6px;top:757.4px;line-height:40px;transform:scaleX(0.924);transform-origin:left center;">Pink Champagne Cookies</div>
<svg style="left:1458.4px;top:800.7px" width="10" height="13.2" viewBox="0 0 10 13.2"><path d="M2.300 1.900 L7 6.600 L2.300 11.300" fill="none" stroke="#666" stroke-width="3.100" stroke-linecap="round" stroke-linejoin="round"/></svg>
<div class="t rr" style="left:1477.2px;top:787.3px;line-height:40px;">Medium</div>
<svg style="left:1458.4px;top:830.7px" width="10" height="13.2" viewBox="0 0 10 13.2"><path d="M2.300 1.900 L7 6.600 L2.300 11.300" fill="none" stroke="#666" stroke-width="3.100" stroke-linecap="round" stroke-linejoin="round"/></svg>
<div class="t rr" style="left:1477.2px;top:817.3px;line-height:40px;">White</div>
<svg style="left:1458.4px;top:860.6px" width="10" height="13.2" viewBox="0 0 10 13.2"><path d="M2.300 1.900 L7 6.600 L2.300 11.300" fill="none" stroke="#666" stroke-width="3.100" stroke-linecap="round" stroke-linejoin="round"/></svg>
<div class="t rr" style="left:1477.2px;top:847.2px;line-height:40px;">Metal</div>
<svg style="left:1459.1px;top:886.6px" width="19.5" height="19.5" viewBox="0 0 512 512" fill="#666"><path d="M0 252.118V48C0 21.49 21.49 0 48 0h204.118a48 48 0 0 1 33.941 14.059l211.882 211.882c18.745 18.745 18.745 49.137 0 67.882L293.823 497.941c-18.745 18.745-49.137 18.745-67.882 0L14.059 286.059A48 48 0 0 1 0 252.118zM112 64c-26.51 0-48 21.49-48 48s21.49 48 48 48 48-21.49 48-48-21.49-48-48-48z"/></svg>
<div class="t rr" style="left:1486.5px;top:877.3px;line-height:40px;">immediate delivery</div>
<div class="t rr" style="left:1754.5px;top:817.3px;line-height:40px;letter-spacing:-.95px">ZNCHSKU</div>
<div class="t rr" style="right:907.0px;top:817.3px;line-height:40px;">1 kg</div>
<div class="t rr" style="right:823.5px;top:817.3px;line-height:40px;">1</div>
<div class="t rr" style="right:726.4px;top:817.3px;line-height:40px;">4%</div>
<div class="t rr" style="right:579.2px;top:802.0px;line-height:40px;text-decoration:line-through;-webkit-text-stroke:.5px #666">$ 100.00</div>
<div class="t rr" style="right:579.2px;top:832.0px;line-height:40px;">$ 90.00</div>
<div class="t rr" style="right:432.2px;top:817.3px;line-height:40px;">$ 90.00</div>
<svg style="left:1325px;top:621px" width="116" height="110" viewBox="0 0 116 110"><defs><radialGradient id="sh1" cx=".5" cy=".5" r=".5"><stop offset="0" stop-color="#d9d9d9"/><stop offset="1" stop-color="#ffffff" stop-opacity="0"/></radialGradient><filter id="bl1"><feGaussianBlur stdDeviation=".55"/></filter></defs>
<ellipse cx="60" cy="90" rx="54" ry="16" fill="url(#sh1)"/>
<g filter="url(#bl1)">
<path d="M53.7 15.9 L66.7 10.8 L115.6 17.3 L103.1 23.8 Z" fill="#eeeeee"/>
<path d="M53.7 15.9 L103.1 23.8 L103.1 73.2 L52.8 62.1 Z" fill="#e3e3e3"/>
<path d="M103.1 23.8 L115.6 17.3 L114.7 63.9 L103.1 73.2 Z" fill="#d0d0d0"/>
<path d="M62 24 C60 46 66 62 72 61 C82 60 88 36 91 27" fill="none" stroke="#c9c9c9" stroke-width="6.2"/>
<path d="M62 24 C60 46 66 62 72 61 C82 60 88 36 91 27" fill="none" stroke="#f3f3f3" stroke-width="4.2"/>
<path d="M70.8 30.7 L82.8 31.7 L82.4 42 L70.6 40.8 Z" fill="#3b3b3d"/>
<path d="M104.500 25.500 L110 34" stroke="#8a7a52" stroke-width=".9"/>
<path d="M10.8 15 L38 17.8 L32.5 67.6 L3.9 65.8 Z" fill="#e9eaec"/>
<path d="M11.600 20 L37 22.600 L33.800 51 L8.300 49.500 Z" fill="#2c2c30"/>
<circle cx="17.300" cy="29" r="4.700" fill="#e1b4bb"/><circle cx="29.500" cy="29.400" r="4.300" fill="#d8a9b0"/><circle cx="14.700" cy="44.500" r="4.700" fill="#dfb1b8"/><circle cx="27.500" cy="46.400" r="4.700" fill="#e3b7bd"/>
<path d="M25.400 24.500 L32 25.200 L31 36.800 L24.400 36 Z" fill="#f2eee9"/><path d="M26.500 26 L30.800 26.400 L30.300 32.400 L26 32 Z" fill="#8c2f1e"/>
<path d="M5.800 50.500 L12 51 L10.800 60.500 L4.600 60 Z" fill="#1d1d21"/>
<path d="M38 17.800 L54.700 21.500 L50 64.900 L33.400 64 Z" fill="#e4e6e9"/>
<path d="M39 21.800 L54 25 L51 53 L35.500 51.800 Z" fill="#2a2a2e"/>
<circle cx="45.500" cy="28.600" r="4.600" fill="#b5353a"/><circle cx="44" cy="45.500" r="4.800" fill="#a9373c"/>
<path d="M3.900 76.900 L28.800 70.400 L54.700 88 L28.800 92.600 Z" fill="#c3c6ca"/>
<path d="M9 77.500 L26 73.500 L40 83.500 L24 87 Z" fill="#4a4b50"/><path d="M14 79.500 L26 77 L33 82 L22 84.500 Z" fill="#9da0a5"/>
<path d="M33.400 68.600 L54.700 59.800 L91.600 87 L68.500 99 Z" fill="#d9dbde"/>
<path d="M36.500 69.600 L54 62.300 L75 77.500 L56 86.300 Z" fill="#3a3134"/>
<path d="M38.500 69.800 L46.800 66.300 L54 71.500 L45.500 75.200 Z" fill="#b05f3a"/><path d="M48.500 65.600 L54 63.400 L61.500 68.800 L55.500 71.200 Z" fill="#b8653d"/><path d="M47 76.300 L55.500 72.600 L62.800 77.800 L54.300 81.700 Z" fill="#ad5a36"/><path d="M57.200 71.800 L63 69.600 L71.800 76 L64.400 78.700 Z" fill="#b5623b"/>
<path d="M57 87.500 L66 83.300 L72.500 88 L63.500 92.500 Z" fill="#2a2a38"/><path d="M68.500 82 L77 78.500 L88.500 87 L80.500 91 Z" fill="#ecedef"/>
<path d="M59 89.500 L68.500 99 L91.600 87 L90 84.500 L68.500 95 Z" fill="#4b4b4f"/>
</g></svg>
<svg style="left:1325px;top:790px" width="120" height="90" viewBox="0 0 120 90"><defs><filter id="bl2"><feGaussianBlur stdDeviation=".75"/></filter></defs><g filter="url(#bl2)">
<rect x="22.9" y="7.9" width="55.2" height="31.1" fill="#3e302b" />
<rect x="46.0" y="7.9" width="12.0" height="31.1" fill="#352823" />
<path d="M37.5 25.0 l8 0 l5 6 l7-9 l7 3 l-3 12 l-26 0 Z" fill="#2b1f1b"/>
<rect x="6.3" y="29.0" width="22.6" height="42.0" fill="#6c2944" rx="1.5"/>
<rect x="6.3" y="32.5" width="22.6" height="13.5" fill="#4b2f33" />
<rect x="6.3" y="28.8" width="22.6" height="4.2" fill="#e6e3e1" rx="1.5"/>
<rect x="8.0" y="36.0" width="19.0" height="2.2" fill="#c9b9a8" />
<rect x="8.0" y="40.0" width="19.0" height="2.0" fill="#c4b4a6" />
<rect x="10.5" y="56.0" width="13.5" height="1.5" fill="#c9a9b6" />
<circle cx="24.5" cy="45.5" r="2.800" fill="#2e2a2a" stroke="#b9b2ad" stroke-width=".6"/>
<rect x="28.9" y="38.4" width="35.7" height="27.0" fill="#433b37" />
<rect x="31.0" y="41.5" width="29.0" height="2.7" fill="#bfa870" />
<rect x="38.0" y="47.5" width="17.0" height="3.3" fill="#bfa870" />
<rect x="37.0" y="53.5" width="17.0" height="2.8" fill="#bfa870" />
<rect x="38.0" y="58.3" width="15.0" height="2.7" fill="#bfa870" />
<circle cx="52.7" cy="52.7" r="4.200" fill="#8a6a2c"/><circle cx="52.7" cy="52.7" r="2" fill="#c9a24a"/>
<rect x="65.4" y="20.2" width="21.8" height="16.8" fill="#523a2e" />
<rect x="67.5" y="29.0" width="18.0" height="1.6" fill="#d9c6a8" />
<rect x="67.5" y="31.6" width="18.0" height="1.6" fill="#d9c6a8" />
<rect x="65.4" y="37.0" width="21.8" height="19.0" fill="#dfe3e7" />
<rect x="73.0" y="42.0" width="1.0" height="13.0" fill="#8b9094" />
<rect x="78.0" y="42.0" width="1.0" height="13.0" fill="#8b9094" />
<rect x="87.2" y="20.6" width="22.6" height="46.8" fill="#c79062" />
<rect x="89.6" y="23.3" width="18.7" height="20.7" fill="#e6e8ec" />
<circle cx="104.3" cy="46.5" r="3.600" fill="#b8862e"/>
<circle cx="105.5" cy="55.5" r="3.400" fill="#3a3428"/>
<rect x="62.6" y="55.1" width="38.5" height="20.6" fill="#3b2823" />
<rect x="69.0" y="67.0" width="25.0" height="1.6" fill="#e5dccf" />
<rect x="69.0" y="69.8" width="25.0" height="1.8" fill="#e5dccf" />
<rect x="88.4" y="51.1" width="11.9" height="8.9" fill="#36231e" rx="1.5"/>
<rect x="96.3" y="68.2" width="9.7" height="9.8" fill="#38241f" rx="1.5"/>
</g></svg>
<div class="t ph" style="left:1324.5px;top:931.3px;line-height:40px;transform:scaleX(0.8982);transform-origin:left center;">ORDER NOTE :</div>
<div class="t rr" style="left:1512.0px;top:930.6px;line-height:40px;">Please ship my products before weekend.</div>
<div class="t ph" style="right:582.0px;top:931.3px;line-height:40px;transform:scaleX(0.9294);transform-origin:right center;">SUB TOTAL :</div>
<div class="t rr" style="right:432.2px;top:930.3px;line-height:40px;">$ 125.00</div>
<div class="b " style="left:1998px;top:980.7px;width:453px;height:1.5px;background:#ececec"></div>
<div class="t ph" style="right:582.0px;top:992.4px;line-height:40px;transform:scaleX(0.9477);transform-origin:right center;">DISCOUNT :</div>
<div class="t rr" style="right:432.2px;top:991.4px;line-height:40px;">- $ 12.50</div>
<div class="b " style="left:1998px;top:1041.8px;width:453px;height:1.5px;background:#ececec"></div>
<div class="t ph" style="right:582.0px;top:1053.5px;line-height:40px;transform:scaleX(0.9061);transform-origin:right center;">SHIPPING :</div>
<div class="t rr" style="right:432.2px;top:1052.5px;line-height:40px;">$ 6.98</div>
<div class="b " style="left:1998px;top:1102.9px;width:453px;height:1.5px;background:#ececec"></div>
<div class="t ph" style="right:582.0px;top:1114.6px;line-height:40px;transform:scaleX(0.9332);transform-origin:right center;">TAX :</div>
<div class="t rr" style="right:432.2px;top:1113.6px;line-height:40px;">$ 4.28</div>
<div class="b " style="left:1998px;top:1164.0px;width:453px;height:1.5px;background:#ececec"></div>
<div class="t ph" style="right:582.0px;top:1175.7px;line-height:40px;transform:scaleX(0.8798);transform-origin:right center;">REFUNDED :</div>
<div class="t rr" style="right:432.2px;top:1174.7px;line-height:40px;">$ -111.26</div>
<div class="b " style="left:1998px;top:1225.1px;width:453px;height:1.5px;background:#ececec"></div>
<div class="t ph" style="right:582.0px;top:1236.8px;line-height:40px;transform:scaleX(0.9286);transform-origin:right center;">TOTAL :</div>
<div class="t rr" style="right:432.2px;top:1235.8px;line-height:40px;">$ 0.00</div>
<div class="b " style="left:1998px;top:1286.2px;width:453px;height:1.5px;background:#ececec"></div>
<div class="t ph" style="right:582.0px;top:1297.9px;line-height:40px;transform:scaleX(0.9429);transform-origin:right center;">PAID :</div>
<div class="t rr" style="right:432.2px;top:1296.9px;line-height:40px;">$ 111.26</div>
<div class="b " style="left:1998px;top:1347.3px;width:453px;height:1.5px;background:#ececec"></div>
<div class="t ph" style="right:582.0px;top:1359.0px;line-height:40px;transform:scaleX(0.9369);transform-origin:right center;">AMOUNT DUE :</div>
<div class="t rr" style="right:432.2px;top:1358.0px;line-height:40px;">$ 0.00</div>
<div class="b " style="left:1998px;top:1408.4px;width:453px;height:1.5px;background:#ececec"></div>
<div class="t ph" style="left:1320.0px;top:1449.0px;line-height:40px;transform:scaleX(0.9112);transform-origin:left center;">TERMS &amp; NOTES</div>
<div class="t rr" style="left:1320.0px;top:1486.8px;line-height:40px;letter-spacing:-.1px">Thank you for your valued business. We greatly value your trust and confidence and</div>
<div class="t rr" style="left:1320.0px;top:1516.6px;line-height:40px;letter-spacing:-.1px">sincerely appreciate your loyalty to our business.</div>
<svg style="left:2217px;top:1485px" width="227" height="30" viewBox="0 0 227 30"><g fill="#000">
<rect x="0" y="1.5" width="26.5" height="26.5" rx="2.4"/><path d="M13.9 28 V18.3 H10.6 V14.4 H13.9 V11.6 C13.9 8.1 16 6.3 19 6.3 C20.4 6.3 21.7 6.5 22 6.5 V10 H20.2 C18.6 10 18.2 10.8 18.2 12 V14.4 H21.9 L21.3 18.3 H18.2 V28 Z" fill="#fff"/>
<path d="M41 3.2 H46.8 L66.4 27 H60.6 Z M44.3 4.8 L61.6 25.4 H63 L45.700 4.8 Z" fill-rule="evenodd"/><path d="M61.5 3.2 H65.2 L45.1 27 H41.4 Z" />
<path fill-rule="evenodd" d="M81.5 1.8 h11 a7.5 7.5 0 0 1 7.5 7.5 v11 a7.5 7.5 0 0 1-7.5 7.5 h-11 a7.5 7.5 0 0 1-7.5-7.5 v-11 a7.5 7.5 0 0 1 7.5-7.5 Z M81.8 4.2 a5.4 5.4 0 0 0-5.4 5.4 v10.4 a5.4 5.4 0 0 0 5.4 5.4 h10.4 a5.4 5.4 0 0 0 5.4-5.4 v-10.400 a5.4 5.400 0 0 0-5.400-5.400 Z"/>
<path fill-rule="evenodd" d="M87 8.100 a6.700 6.700 0 1 0 .01 0 Z M87 10.500 a4.300 4.300 0 1 1-.01 0 Z"/><circle cx="94.100" cy="7.800" r="1.600"/>
<path d="M118 3.900 C124 3.300 134 3.300 140 3.900 C143.500 4.300 145 6 145.400 9 C145.900 12.800 145.900 16.800 145.400 20.600 C145 23.600 143.500 25.300 140 25.700 C134 26.300 124 26.300 118 25.700 C114.500 25.300 113 23.600 112.600 20.600 C112.100 16.800 112.100 12.800 112.600 9 C113 6 114.500 4.300 118 3.900 Z"/><path d="M125.300 9.800 L134.200 14.800 L125.300 19.800 Z" fill="#fff"/>
<rect x="158" y="1.500" width="26.500" height="26.500" rx="2.200"/><g fill="#fff"><circle cx="164.300" cy="7.800" r="2.300"/><rect x="162.300" y="11.700" width="4" height="12.300"/><path d="M168.800 11.700 h3.800 v1.700 c.8-1.300 2.200-2.100 4.200-2.100 c3.600 0 4.600 2.300 4.600 5.700 V24 h-4 v-6.200 c0-1.600-.300-2.900-2.100-2.900 c-1.800 0-2.500 1.300-2.500 3 V24 h-4 Z"/></g>
<circle cx="211.500" cy="14.700" r="14.600"/><path d="M208 29 C207.600 26 208.400 23.600 209 21 L210.800 13.600 C210 12 210.600 9.400 212.600 9.400 C215.400 9.400 213.200 14.200 213.200 16 C213.200 17.400 214.200 18.200 215.400 18.200 C218 18.200 219.600 15 219.600 11.600 C219.600 8.600 217.400 6.400 214 6.400 C209.800 6.400 207.400 9.400 207.400 12.600 C207.400 14 207.800 14.800 208.400 15.600 L207.800 18 C205.800 17.200 204.600 15 204.600 12.400 C204.600 7.800 208.400 3.600 214.400 3.600 C219.400 3.600 222.800 7.200 222.800 11.400 C222.800 16.600 219.800 20.800 215.400 20.800 C214 20.800 212.600 20 212.200 19.200 L211.200 23.200 C210.800 24.800 209.800 27 209 28.400 Z" fill="#fff"/>
</g></svg>
<div class="b " style="left:708px;top:265px;width:531.5px;height:104px;border:5px solid #1230b4;border-radius:11px"></div>
<div class="b " style="left:714px;top:1109.5px;width:276px;height:66.0px;border:5px solid #1230b4;border-radius:11px"></div>
<div class="b " style="left:1437.7px;top:711px;width:205.5px;height:38.5px;border:5px solid #1230b4;border-radius:10px"></div>
<div class="b " style="left:1449.6px;top:874px;width:242.20000000000005px;height:46.5px;border:5px solid #1230b4;border-radius:10px"></div>
<svg style="left:0;top:0" width="2878" height="1548" viewBox="0 0 2878 1548" fill="none">
<path d="M906.5 370 L919.2 1080" stroke="#1414ff" stroke-width="3.2"/>
<path d="M919.8 1107 L906 1075 L919.3 1081.500 L932.700 1075 Z" fill="#1414ff"/>
<path d="M990 1123.500 L1428 918" stroke="#1414ff" stroke-width="3.100"/>
<path d="M1444.300 910 L1421 910.300 L1430 917 L1429.300 926.700 Z" fill="#1414ff"/>
</svg>
</div></div></body></html>
